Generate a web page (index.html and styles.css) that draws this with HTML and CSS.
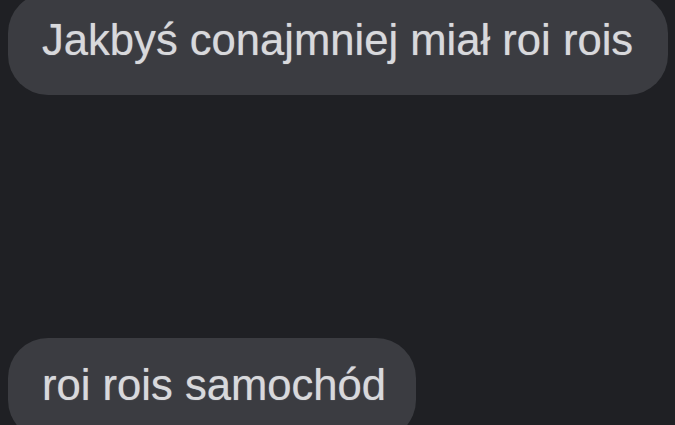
FILE: index.html
```html
<!DOCTYPE html>
<html lang="pl">

<head>
	<meta charset="UTF-8">
	<meta name="viewport" content="width=device-width, initial-scale=1.0">
	<title>Chat</title>
	<link rel="stylesheet" href="styles.css">
</head>

<body>
	<div class="chat">
		<div class="bubble first">Jakbyś conajmniej miał roi rois</div>
		<div class="bubble second">roi rois samochód</div>
	</div>
</body>

</html>
```

FILE: styles.css
```css
* {
	box-sizing: border-box;
}

body {
	font-family: 'Liberation Sans', Arial, sans-serif;
	background-color: #1f2024;
	margin: 0;
	height: 425px;
	overflow: hidden;
}

.chat {
	display: flex;
	flex-direction: column;
	align-items: flex-start;
	gap: 243px;
	padding: 0 8px;
}

.bubble {
	background-color: #3b3c41;
	color: #d8d9dc;
	font-size: 43.6px;
	line-height: 50px;
	padding: 22px 35px 30px 34px;
	border-radius: 40px;
	white-space: nowrap;
	text-shadow: 0 0 1px rgba(220, 221, 224, 0.6);
}

.bubble.first {
	margin-top: -7px;
}

.bubble.second {
	padding-right: 30px;
}
```
